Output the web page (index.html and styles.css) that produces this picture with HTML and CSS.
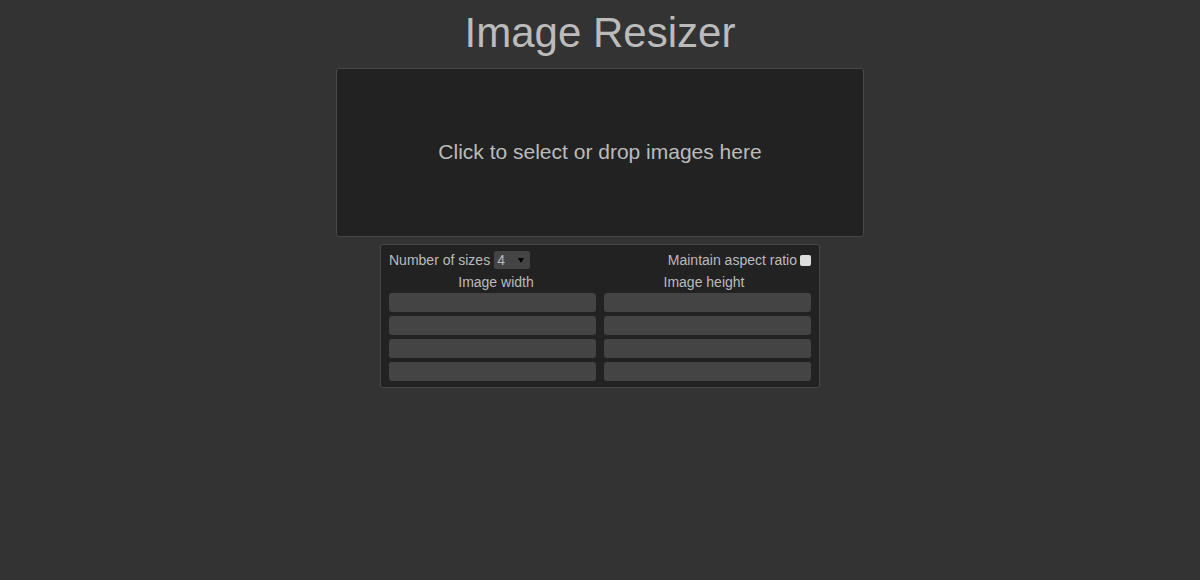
FILE: index.html
```html
<!DOCTYPE html>
<html lang="en">
<head>
<meta charset="utf-8">
<title>Image Resizer</title>
<link rel="stylesheet" href="styles.css">
</head>
<body>
<main class="app">
  <h1 class="title">Image Resizer</h1>
  <div class="dropzone">Click to select or drop images here</div>
  <section class="panel">
    <div class="top-row">
      <label class="count">Number of sizes
        <span class="select-wrap">
          <select class="select">
            <option>1</option><option>2</option><option>3</option><option selected>4</option><option>5</option>
          </select>
          <span class="arrow"></span>
        </span>
      </label>
      <label class="aspect">Maintain aspect ratio <input type="checkbox" class="check"></label>
    </div>
    <div class="grid labels">
      <div class="label">Image width</div>
      <div class="label">Image height</div>
    </div>
    <div class="grid inputs">
      <input class="field" type="text">
      <input class="field" type="text">
      <input class="field" type="text">
      <input class="field" type="text">
      <input class="field" type="text">
      <input class="field" type="text">
      <input class="field" type="text">
      <input class="field" type="text">
    </div>
  </section>
</main>
</body>
</html>
```
FILE: styles.css
```css
html, body {
  margin: 0;
  padding: 0;
  background: #333333;
  height: 100%;
}
body {
  font-family: "Liberation Sans", Arial, sans-serif;
  color: #bbbbbb;
}
.app {
  display: flex;
  flex-direction: column;
  align-items: center;
  padding-top: 9px;
}
.title {
  margin: 0 0 11px;
  font-size: 42px;
  line-height: 48px;
  font-weight: normal;
  color: #bbbbbb;
}
.dropzone {
  box-sizing: border-box;
  width: 528px;
  height: 169px;
  padding-bottom: 2px;
  display: flex;
  align-items: center;
  justify-content: center;
  background: #222222;
  border: 1px solid #474747;
  border-radius: 3px;
  font-size: 21px;
  color: #bbbbbb;
  cursor: pointer;
}
.panel {
  box-sizing: border-box;
  width: 440px;
  margin-top: 7px;
  padding: 6px 8px 6px 8px;
  background: #222222;
  border: 1px solid #474747;
  border-radius: 3px;
  font-size: 14px;
}
.top-row {
  display: flex;
  justify-content: space-between;
  align-items: center;
  height: 18px;
  line-height: 18px;
}
.count, .aspect {
  display: flex;
  align-items: center;
}
.select-wrap {
  position: relative;
  display: inline-block;
  margin-left: 4px;
  width: 36px;
  height: 18px;
}
.select {
  appearance: none;
  -webkit-appearance: none;
  box-sizing: border-box;
  width: 36px;
  height: 18px;
  margin: 0;
  padding: 0 0 0 3px;
  border: none;
  border-radius: 2px;
  background: #444444;
  color: #bbbbbb;
  font-family: "Liberation Sans", Arial, sans-serif;
  font-size: 14px;
  line-height: 18px;
  outline: none;
}
.arrow {
  position: absolute;
  left: 24px;
  top: 7px;
  width: 0;
  height: 0;
  border-left: 3px solid transparent;
  border-right: 3px solid transparent;
  border-top: 5px solid #000000;
  pointer-events: none;
}
.check {
  appearance: none;
  -webkit-appearance: none;
  box-sizing: border-box;
  width: 11px;
  height: 11px;
  margin: 0 0 0 3px;
  background: #dddddd;
  border: none;
  border-radius: 2px;
}
.grid {
  display: grid;
  grid-template-columns: 1fr 1fr;
  column-gap: 8px;
}
.labels {
  column-gap: 0;
  padding: 2px 3px 0;
  line-height: 22px;
}
.label {
  text-align: center;
}
.inputs {
  row-gap: 4px;
}
.field {
  box-sizing: border-box;
  width: 100%;
  height: 19px;
  margin: 0;
  padding: 0 4px;
  border: none;
  border-radius: 3px;
  background: #444444;
  color: #bbbbbb;
  font-family: "Liberation Sans", Arial, sans-serif;
  font-size: 14px;
  outline: none;
}
```
